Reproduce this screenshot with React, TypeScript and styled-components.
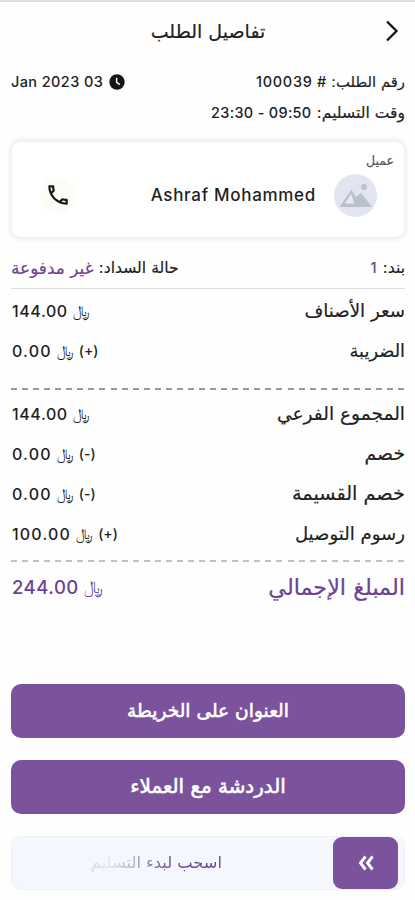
import React from "react";
import styled, { createGlobalStyle } from "styled-components";
import { MdOutlineCall } from "react-icons/md";

const PURPLE = "#7b539d";
const PURPLE_TEXT = "#6c4394";
const INK = "#1f1f1f";

const GlobalStyle = createGlobalStyle`
  * { box-sizing: border-box; }
  body { margin: 0; background: #fff; }
  button { border: 0; padding: 0; background: none; font: inherit; cursor: pointer; }
`;

const Screen = styled.main`
  width: 415px;
  height: 900px;
  overflow: hidden;
  background: #fefefe;
  border-top: 2px solid #dedede;
  padding: 0 10px 0 11px;
  color: ${INK};
  display: flex;
  flex-direction: column;
`;

const Ar = styled.span<{ $size: number }>`
  font-family: "DejaVu Sans", sans-serif;
  font-size: ${p => p.$size}px;
  line-height: 1;
  white-space: nowrap;
  -webkit-text-stroke: 0.2px currentColor;
`;

const Num = styled.span<{ $size: number; $space?: number }>`
  direction: ltr;
  unicode-bidi: isolate;
  font-family: Inter, sans-serif;
  font-weight: 500;
  font-size: ${p => p.$size}px;
  letter-spacing: ${p => p.$space ?? 0}px;
  line-height: 1;
  white-space: pre;
`;

const Header = styled.header`
  display: grid;
  grid-template-columns: 40px 1fr 40px;
  align-items: center;
  height: 58px;
`;

const Title = styled.h1`
  grid-column: 2;
  margin: 0;
  font-weight: 400;
  display: flex;
  justify-content: center;
`;

const BackButton = styled.button`
  grid-column: 1;
  display: flex;
  justify-content: flex-start;
  padding-right: 6px;
`;

const MetaRow = styled.div<{ $h: number }>`
  display: flex;
  align-items: center;
  justify-content: space-between;
  height: ${p => p.$h}px;
`;

const Pair = styled.div<{ $gap?: number }>`
  display: flex;
  align-items: center;
  gap: ${p => p.$gap ?? 5}px;
`;

const Card = styled.section`
  height: 97px;
  margin-top: 18px;
  border-radius: 10px;
  background: #fff;
  border: 1px solid #f3f3f3;
  box-shadow: 0 0 5px 1px rgba(0, 0, 0, 0.09);
  padding: 9px 10px 0 28px;
  display: flex;
  flex-direction: column;
`;

const CardLabel = styled.div`
  height: 20px;
  display: flex;
  align-items: center;
  color: #555;
`;

const CardBody = styled.div`
  display: flex;
  align-items: center;
  gap: 18px;
  height: 48px;
  padding-right: 17px;
`;

const Avatar = styled.div`
  width: 43px;
  height: 43px;
  border-radius: 50%;
  background: #e2e5f0;
  overflow: hidden;
`;

const CallButton = styled.button`
  width: 36px;
  height: 36px;
  border-radius: 50%;
  margin-right: auto;
  display: flex;
  align-items: center;
  justify-content: center;
  background: #fcfbf6;
  color: #171717;
`;

const StatusRow = styled(MetaRow)`
  margin-top: 11px;
  margin-bottom: 2px;
  border-bottom: 1px solid #dcdcdc;
`;

const Accent = styled.span`
  color: ${PURPLE_TEXT};
  display: inline-flex;
`;

const Line = styled.div<{ $accent?: boolean }>`
  display: flex;
  align-items: center;
  justify-content: space-between;
  height: 40px;
  color: ${p => (p.$accent ? PURPLE_TEXT : INK)};
`;

const Amount = styled.div`
  direction: ltr;
  display: flex;
  align-items: center;
  padding-left: 1px;
`;

const Rial = styled.span<{ $size: number }>`
  font-family: "DejaVu Sans", sans-serif;
  font-size: ${p => p.$size}px;
  line-height: 1;
  margin: 0 5px;
`;

const Dashes = styled.div<{ $top: number; $bottom: number; $light?: boolean }>`
  height: 2px;
  margin: ${p => p.$top}px 0 ${p => p.$bottom}px;
  background: repeating-linear-gradient(
    to right,
    ${p => (p.$light ? "#c2c2c2" : "#9a9a9a")} 0 6px,
    transparent 6px 11.06px
  );
`;

const Actions = styled.div`
  display: flex;
  flex-direction: column;
  gap: 22px;
  margin-top: 77px;
`;

const ActionButton = styled.button`
  height: 54px;
  border-radius: 10px;
  background: ${PURPLE};
  color: #fff;
  display: flex;
  align-items: center;
  justify-content: center;

  ${Ar} {
    -webkit-text-stroke: 0.6px #fff;
  }
`;

const Swipe = styled.div`
  height: 54px;
  border-radius: 10px;
  background: #f4f7fe;
  border: 1px solid #eef0f6;
  display: flex;
  align-items: center;
  padding-right: 6px;
`;

const Thumb = styled.button`
  width: 65px;
  height: 52px;
  border-radius: 9px;
  background: ${PURPLE};
  display: flex;
  align-items: center;
  justify-content: center;
`;

const SwipeText = styled.div`
  margin-right: 111px;
  padding: 6px 0;
  display: flex;
  color: transparent;
  background: linear-gradient(to left, #704894 0 38%, #9a80b5 56%, #c3c4d2 74%, #e6e9f1 88%, #d4d7e0 100%);
  background-clip: text;
  -webkit-background-clip: text;

  ${Ar} {
    -webkit-text-stroke: 0;
  }
`;

type LineData = { label: string; size: number; value: string; space: number; sign?: string };

const items: LineData[] = [
  { label: "سعر الأصناف", size: 18.2, value: "144.00", space: 0.6 },
  { label: "الضريبة", size: 17.8, value: "0.00", space: 1.2, sign: "(+)" },
];

const charges: LineData[] = [
  { label: "المجموع الفرعي", size: 18.6, value: "144.00", space: 0.6 },
  { label: "خصم", size: 18.8, value: "0.00", space: 1.2, sign: "(-)" },
  { label: "خصم القسيمة", size: 19.3, value: "0.00", space: 1.2, sign: "(-)" },
  { label: "رسوم التوصيل", size: 18.1, value: "100.00", space: 1.2, sign: "(+)" },
];

function PriceLine({ label, size, value, space, sign }: LineData) {
  return (
    <Line>
      <Ar $size={size}>{label}</Ar>
      <Amount>
        <Num $size={16} $space={space}>{value}</Num>
        <Rial $size={15}>﷼</Rial>
        {sign && <Num $size={14} $space={0}>{sign}</Num>}
      </Amount>
    </Line>
  );
}

export default function App() {
  return (
    <Screen dir="rtl">
      <GlobalStyle />
      <Header>
        <BackButton aria-label="رجوع">
          <svg width="14" height="22" viewBox="0 0 14 22" fill="none" stroke="#161616" strokeWidth="2.3">
            <path d="M2 1.5 L11.5 11 L2 20.5" />
          </svg>
        </BackButton>
        <Title><Ar $size={19}>تفاصيل الطلب</Ar></Title>
      </Header>

      <MetaRow $h={44}>
        <Pair $gap={4}>
          <Ar $size={14.8}>رقم الطلب:</Ar>
          <Num $size={14.5} $space={0.7}>100039 #</Num>
        </Pair>
        <Pair $gap={6}>
          <svg width="16" height="16" viewBox="0 0 16 16">
            <circle cx="8" cy="8" r="7.7" fill="#151515" />
            <path d="M7.6 3.800V8.300L10.800 10.600" fill="none" stroke="#fff" strokeWidth="1.4" />
          </svg>
          <Num $size={14.5} $space={0.4}>Jan 2023 03</Num>
        </Pair>
      </MetaRow>
      <MetaRow $h={19}>
        <Pair $gap={5}>
          <Ar $size={15.6}>وقت التسليم:</Ar>
          <Num $size={14.5} $space={0.3}>23:30 - 09:50</Num>
        </Pair>
      </MetaRow>

      <Card>
        <CardLabel><Ar $size={12.5}>عميل</Ar></CardLabel>
        <CardBody>
          <Avatar>
            <svg width="43" height="43" viewBox="0 0 43 43">
              <circle cx="30" cy="13" r="2.9" fill="#bcc3d0" />
              <path d="M5.500 33L17.500 15.500L22 23L27 19L38 33Z" fill="#b9c0ce" />
              <path d="M11 29.500L17 20L20.500 29.500Z" fill="#e8ebf4" />
            </svg>
          </Avatar>
          <Num $size={17} $space={0.7}>Ashraf Mohammed</Num>
          <CallButton aria-label="اتصال">
            <MdOutlineCall size={26} />
          </CallButton>
        </CardBody>
      </Card>

      <StatusRow $h={40}>
        <Pair $gap={6}>
          <Ar $size={15.6}>بند:</Ar>
          <Accent><Num $size={14.5}>1</Num></Accent>
        </Pair>
        <Pair $gap={5}>
          <Ar $size={15.6}>حالة السداد:</Ar>
          <Accent><Ar $size={16.9}>غير مدفوعة</Ar></Accent>
        </Pair>
      </StatusRow>

      <div>
        {items.map((item, i) => <PriceLine key={i} {...item} />)}
      </div>
      <Dashes $top={17} $bottom={4} />
      <div>
        {charges.map((item, i) => <PriceLine key={i} {...item} />)}
      </div>
      <Dashes $top={6} $bottom={5} $light />
      <Line $accent>
        <Ar $size={22.3}>المبلغ الإجمالي</Ar>
        <Amount>
          <Num $size={18.5} $space={0.5}>244.00</Num>
          <Rial $size={17}>﷼</Rial>
        </Amount>
      </Line>

      <Actions>
        <ActionButton><Ar $size={18.6}>العنوان على الخريطة</Ar></ActionButton>
        <ActionButton><Ar $size={19.9}>الدردشة مع العملاء</Ar></ActionButton>
        <Swipe>
          <Thumb aria-label="اسحب">
            <svg width="18" height="16" viewBox="0 0 18 16" fill="none" stroke="#fff" strokeWidth="2.9">
              <path d="M8.500 1.500L3.500 8L8.500 14.500M15.500 1.500L10.500 8L15.500 14.500" />
            </svg>
          </Thumb>
          <SwipeText><Ar $size={16.3}>اسحب لبدء التسليم</Ar></SwipeText>
        </Swipe>
      </Actions>
    </Screen>
  );
}
